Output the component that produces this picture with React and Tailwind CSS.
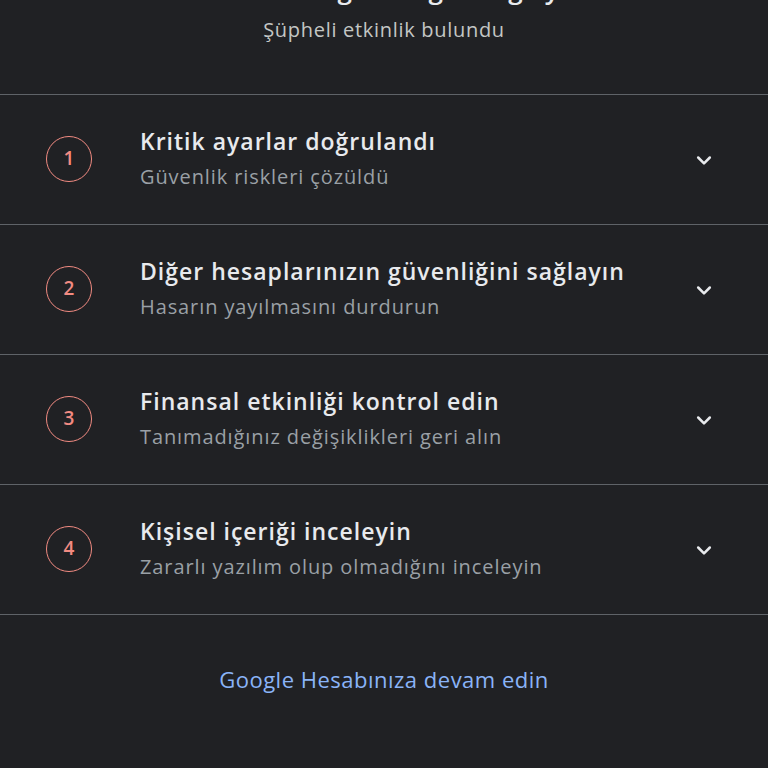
import React from "react";

const steps = [
    { title: "Kritik ayarlar doğrulandı", sub: "Güvenlik riskleri çözüldü" },
    { title: "Diğer hesaplarınızın güvenliğini sağlayın", sub: "Hasarın yayılmasını durdurun" },
    { title: "Finansal etkinliği kontrol edin", sub: "Tanımadığınız değişiklikleri geri alın" },
    { title: "Kişisel içeriği inceleyin", sub: "Zararlı yazılım olup olmadığını inceleyin" },
];

const Chevron = () => (
    <svg className="w-5 h-5 text-[#e8eaed]" viewBox="0 0 24 24" fill="none" stroke="currentColor" strokeWidth="3" strokeLinecap="round" strokeLinejoin="round">
        <path d="M5 9l7 7 7-7" />
    </svg>
);

const App = () => {
    return (
        <div className="min-h-[768px] bg-[#202124] font-['Open_Sans',sans-serif] overflow-hidden">
            <div className="text-center pb-[51px]">
                <h1 className="mt-[-28px] text-[26px] leading-[34px] text-[#e8eaed] font-semibold">Hesabınızın güvenliğini sağlayın</h1>
                <p className="mt-[10px] text-[20px] leading-[27px] text-[#c4c7c5] tracking-[0.7px]">Şüpheli etkinlik bulundu</p>
            </div>
            <div className="border-t border-[#5f6368]">
                {steps.map((s, i) => (
                    <div key={i} className="h-[130px] flex items-center border-b border-[#5f6368] pl-[46px] pr-[54px]">
                        <div className="w-[46px] h-[46px] mb-[2px] rounded-full border-[1.5px] border-[#f28b82] flex items-center justify-center text-[#f28b82] text-[19px] font-semibold">
                            {i + 1}
                        </div>
                        <div className="flex-1 ml-[48px] mb-[3px]">
                            <p className="text-[23px] leading-[30px] font-semibold text-[#e8eaed] tracking-[1px]">{s.title}</p>
                            <p className="mt-[8px] text-[20px] leading-[26px] text-[#9aa0a6] tracking-[0.9px]">{s.sub}</p>
                        </div>
                        <Chevron />
                    </div>
                ))}
            </div>
            <div className="text-center pt-[48px]">
                <a className="text-[22px] text-[#8ab4f8] tracking-[0.5px]">Google Hesabınıza devam edin</a>
            </div>
        </div>
    );
};

export default App;
